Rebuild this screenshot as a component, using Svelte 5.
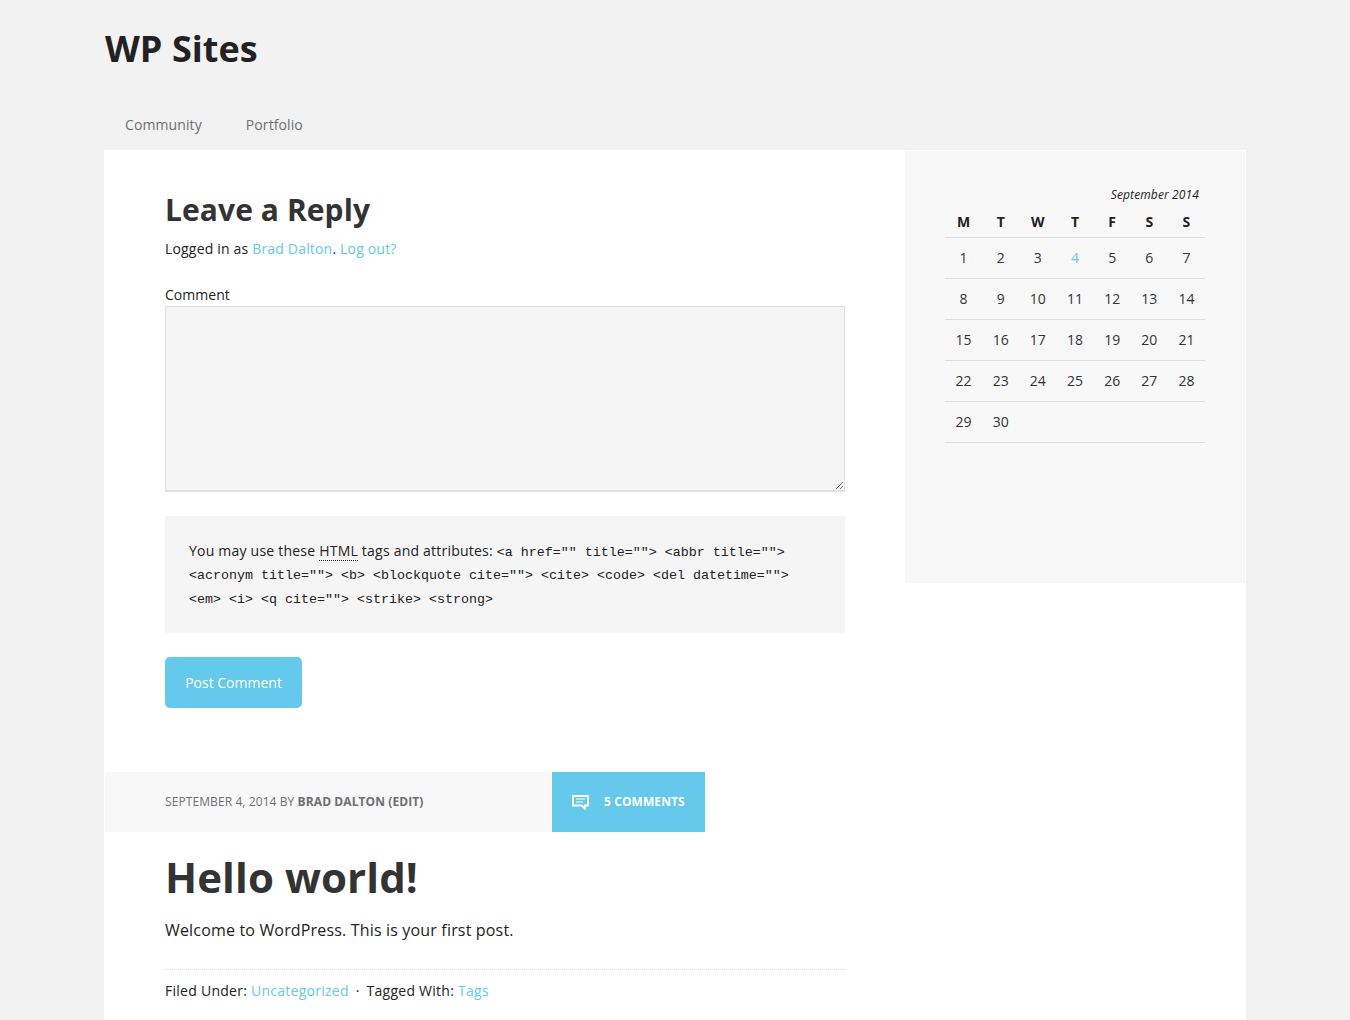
<script>
	const days = ['M', 'T', 'W', 'T', 'F', 'S', 'S'];
	const weeks = [
		[1, 2, 3, 4, 5, 6, 7],
		[8, 9, 10, 11, 12, 13, 14],
		[15, 16, 17, 18, 19, 20, 21],
		[22, 23, 24, 25, 26, 27, 28],
		[29, 30, '', '', '', '', ''],
	];
	const tagLines = [
		'<a href="" title=""> <abbr title="">',
		'<acronym title=""> <b> <blockquote cite=""> <cite> <code> <del datetime="">',
		'<em> <i> <q cite=""> <strike> <strong>',
	];
</script>

<div class="wrap">
	<header>
		<h1>WP Sites</h1>
	</header>
	<nav>
		<a href="#community">Community</a>
		<a href="#portfolio">Portfolio</a>
	</nav>
	<div class="page">
		<main>
			<section class="reply">
				<h3>Leave a Reply</h3>
				<p class="logged">Logged in as <a href="#me">Brad Dalton</a>. <a href="#out">Log out?</a></p>
				<label for="comment">Comment</label>
				<textarea id="comment"></textarea>
				<div class="allowed">
					You may use these <abbr>HTML</abbr> tags and attributes: <code>{tagLines[0]}</code>
					<code>{tagLines[1]}</code>
					<code>{tagLines[2]}</code>
				</div>
				<button>Post Comment</button>
			</section>
			<article>
				<div class="meta">
					<div class="info">SEPTEMBER 4, 2014 BY <b>BRAD DALTON</b> <b>(EDIT)</b></div>
					<a class="count" href="#comments">
						<svg width="17" height="15" viewBox="0 0 17 15" fill="none">
							<path d="M1 1H16V10.5H13V13.5L9.5 10.5H1Z" stroke="#fff" stroke-width="2" />
							<path d="M4 4H13M4 7H11" stroke="#fff" stroke-width="1" />
						</svg>
						<span>5 COMMENTS</span>
					</a>
				</div>
				<div class="body">
					<h2>Hello world!</h2>
					<p class="text">Welcome to WordPress. This is your first post.</p>
					<p class="filed">Filed Under: <a href="#cat">Uncategorized</a> <span class="dot">·</span> Tagged With: <a href="#tag">Tags</a></p>
				</div>
			</article>
		</main>
		<aside>
			<div class="caption">September 2014</div>
			<table>
				<thead>
					<tr>
						{#each days as d}
							<th>{d}</th>
						{/each}
					</tr>
				</thead>
				<tbody>
					{#each weeks as week}
						<tr>
							{#each week as day}
								<td>
									{#if day === 4}
										<a href="#d4">{day}</a>
									{:else}
										{day}
									{/if}
								</td>
							{/each}
						</tr>
					{/each}
				</tbody>
			</table>
		</aside>
	</div>
</div>

<style>
	:global(body) {
		background: #f2f2f2;
		color: #222;
		font-family: "Open Sans", sans-serif;
		font-size: 14px;
	}

	a {
		color: #64c9ea;
		text-decoration: none;
	}

	.wrap {
		width: 1142px;
		margin: 0 auto;
	}

	header {
		height: 100px;
		box-sizing: border-box;
		padding: 26px 0 0 1px;
	}

	h1 {
		margin: 0;
		font-size: 36px;
		line-height: 45px;
		font-weight: 700;
		letter-spacing: 0.05px;
		color: #222;
	}

	nav {
		display: flex;
		height: 50px;
		box-sizing: border-box;
		padding: 0 0 2px 21px;
		align-items: center;
		gap: 44px;
	}

	nav a {
		color: #6d6f73;
		letter-spacing: 0.1px;
	}

	.page {
		display: flex;
		align-items: flex-start;
		background: #fff;
		padding-top: 1px;
		height: 870px;
		overflow: hidden;
	}

	main {
		width: 801px;
	}

	.reply {
		padding: 38px 60px 0 61px;
	}

	h3 {
		margin: 0;
		font-size: 30px;
		line-height: 42px;
		font-weight: 700;
		letter-spacing: 0.08px;
		color: #333;
	}

	.logged {
		margin: 6px 0 0;
		line-height: 24px;
		letter-spacing: 0.18px;
	}

	label {
		display: block;
		margin-top: 22px;
		height: 23px;
		line-height: 24px;
		letter-spacing: 0.03px;
	}

	textarea {
		display: block;
		width: 680px;
		height: 186px;
		box-sizing: border-box;
		margin: 0;
		background: #f5f5f5;
		border: solid #e0e0e0;
		border-width: 1px 1px 2px 1px;
		padding: 16px;
		outline: none;
	}

	.allowed {
		margin-top: 24px;
		background: #f5f5f5;
		padding: 23px 24px;
		line-height: 23.25px;
		height: 117px;
		box-sizing: border-box;
		letter-spacing: 0.22px;
	}

	code {
		font-family: "Liberation Mono", monospace;
		font-size: 13.33px;
		line-height: 1;
		letter-spacing: 0;
	}

	abbr {
		border-bottom: 1px dotted #222;
	}

	button {
		display: block;
		margin-top: 24px;
		width: 137px;
		height: 51px;
		border: 0;
		border-radius: 5px;
		background: #64c9ea;
		color: #fff;
		font-family: inherit;
		font-size: 14px;
		padding: 0;
	}

	article {
		margin-top: 64px;
	}

	.meta {
		display: flex;
		height: 60px;
		margin-left: 1px;
		font-size: 12px;
		letter-spacing: 0.09px;
	}

	.info {
		width: 447px;
		box-sizing: border-box;
		background: #f8f8f8;
		padding-left: 60px;
		line-height: 60px;
		color: #6d6f73;
	}

	.count {
		display: flex;
		align-items: center;
		gap: 15px;
		width: 153px;
		box-sizing: border-box;
		padding-left: 20px;
		background: #64c9ea;
		color: #fff;
		font-weight: 700;
	}

	.count span {
		margin-top: -1px;
	}

	.body {
		padding: 13px 60px 0 61px;
	}

	h2 {
		margin: 0;
		font-size: 42px;
		line-height: 64px;
		font-weight: 700;
		letter-spacing: 0.08px;
		color: #333;
	}

	.text {
		margin: 8px 0 0;
		font-size: 16px;
		line-height: 26px;
		letter-spacing: 0.17px;
	}

	.filed {
		margin: 26px 0 0;
		padding-top: 9px;
		border-top: 1px dotted #ddd;
		line-height: 24px;
		letter-spacing: 0.26px;
	}

	.dot {
		padding: 0 3px;
	}

	aside {
		width: 340px;
		height: 432px;
		box-sizing: border-box;
		background: #f8f8f8;
		padding: 34px 40px 0;
	}

	.caption {
		text-align: right;
		font-size: 12px;
		font-style: italic;
		line-height: 20px;
		padding-right: 6px;
		letter-spacing: 0.12px;
	}

	table {
		width: 260px;
		border-collapse: collapse;
		table-layout: fixed;
	}

	th {
		height: 32px;
		padding: 0;
		font-weight: 700;
		text-align: center;
		border-bottom: 1px solid #ddd;
	}

	td {
		height: 41px;
		padding: 0 0 2px;
		box-sizing: border-box;
		text-align: center;
		border-bottom: 1px solid #ddd;
		color: #333;
	}
</style>
